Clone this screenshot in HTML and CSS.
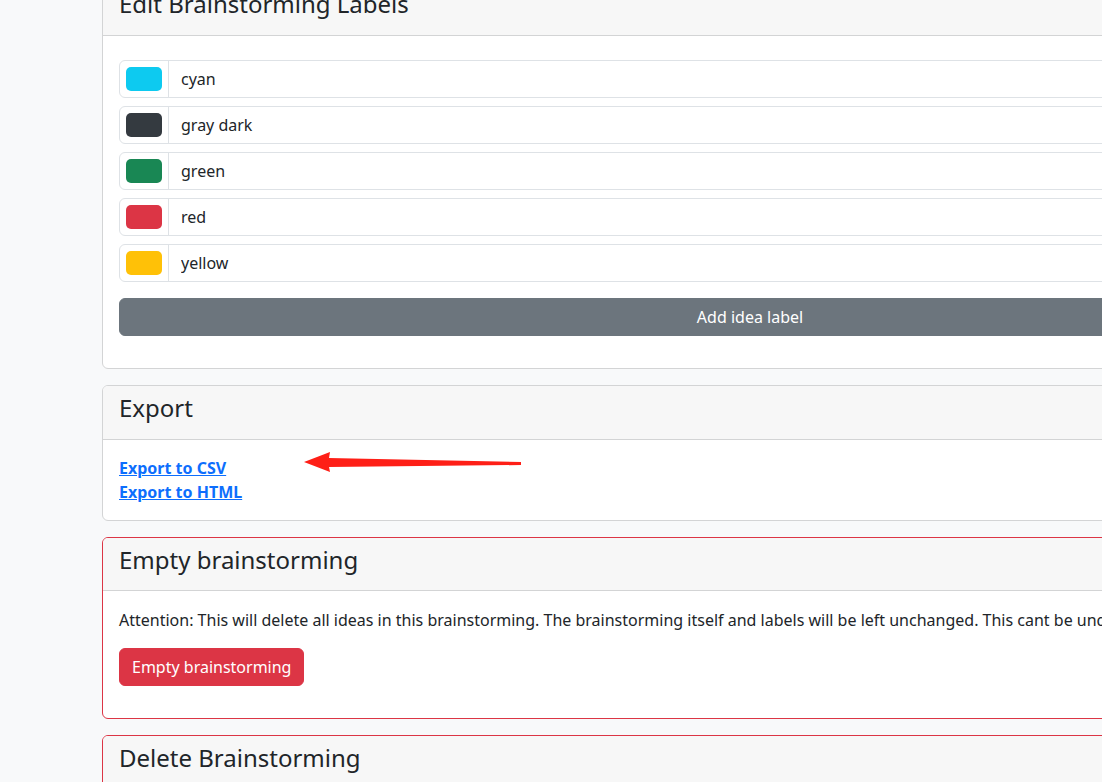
FILE: index.html
```html
<!DOCTYPE html>
<html>
<head>
<meta charset="UTF-8">
<title>Brainstorming settings</title>
<link rel="stylesheet" href="styles.css">
</head>
<body>
<div class="page">

	<!-- labels -->
	<div class="card card-first">
		<div class="card-header"><h4>Edit Brainstorming Labels</h4></div>
		<div class="card-body labels">
			<div class="input-group">
				<span class="swatch-cell"><span class="swatch sw-cyan"></span></span>
				<input type="text" class="form-control" value="cyan">
			</div>
			<div class="input-group">
				<span class="swatch-cell"><span class="swatch sw-dark"></span></span>
				<input type="text" class="form-control" value="gray dark">
			</div>
			<div class="input-group">
				<span class="swatch-cell"><span class="swatch sw-green"></span></span>
				<input type="text" class="form-control" value="green">
			</div>
			<div class="input-group">
				<span class="swatch-cell"><span class="swatch sw-red"></span></span>
				<input type="text" class="form-control" value="red">
			</div>
			<div class="input-group">
				<span class="swatch-cell"><span class="swatch sw-yellow"></span></span>
				<input type="text" class="form-control" value="yellow">
			</div>
			<button type="button" class="btn btn-secondary btn-block">Add idea label</button>
		</div>
	</div>

	<!-- export -->
	<div class="card card-export">
		<div class="card-header"><h4>Export</h4></div>
		<div class="card-body">
			<a href="#" class="export-link">Export to CSV</a><br>
			<a href="#" class="export-link">Export to HTML</a>
		</div>
		<svg class="arrow" width="230" height="30" viewBox="0 0 230 30">
			<polygon points="1,13 27,3 26,9 218,13 218,16 26,18 27,23" fill="#fe1f17"/>
		</svg>
	</div>

	<!-- empty -->
	<div class="card card-danger">
		<div class="card-header"><h4>Empty brainstorming</h4></div>
		<div class="card-body danger-body">
			<p>Attention: This will delete all ideas in this brainstorming. The brainstorming itself and labels will be left unchanged. This cant be undone!</p>
			<button type="button" class="btn btn-danger">Empty brainstorming</button>
		</div>
	</div>

	<!-- delete -->
	<div class="card card-danger">
		<div class="card-header"><h4>Delete Brainstorming</h4></div>
		<div class="card-body danger-body">
			<p>Attention: This will delete the brainstorming with all ideas and labels. This cant be undone!</p>
		</div>
	</div>

</div>
</body>
</html>
```

FILE: styles.css
```css
html, body
{
	margin: 0;
	overflow: hidden;
}
body
{
	background-color: #f8f9fa;
	color: #212529;
	font-family: "Noto Sans", "Liberation Sans", sans-serif;
	font-size: 16px;
	line-height: 1.5;
}
.page
{
	padding-left: 102px;
	width: 1296px;
}
.card
{
	position: relative;
	background-color: #ffffff;
	border: 1px solid #d3d4d5;
	border-radius: 6px;
	margin-bottom: 16px;
}
.card-first
{
	margin-top: -19px;
}
.card-danger
{
	border-color: #dc3545;
}
.card-header
{
	background-color: #f7f7f7;
	border-bottom: 1px solid #d3d4d5;
	border-radius: 5px 5px 0 0;
	padding: 8px 16px;
}
.card-header h4
{
	margin: 0 0 8px 0;
	font-size: 24px;
	font-weight: 400;
	line-height: 1.2;
}
.card-body
{
	padding: 16px;
}
.labels
{
	padding-top: 24px;
}
.danger-body
{
	padding-top: 17px;
}
.input-group
{
	display: flex;
	margin-bottom: 8px;
	border: 1px solid #dee2e6;
	border-radius: 6px;
	height: 36px;
}
.input-group:last-of-type
{
	margin-bottom: 16px;
}
.swatch-cell
{
	display: flex;
	align-items: center;
	justify-content: center;
	width: 48px;
	border-right: 1px solid #dee2e6;
}
.swatch
{
	width: 36px;
	height: 24px;
	border-radius: 5px;
}
.sw-cyan { background-color: #0dcaf0; }
.sw-dark { background-color: #343a40; }
.sw-green { background-color: #198754; }
.sw-red { background-color: #dc3545; }
.sw-yellow { background-color: #ffc107; }
.form-control
{
	flex: 1;
	border: 0;
	background: transparent;
	padding: 0 12px;
	font-family: inherit;
	font-size: 16px;
	color: #212529;
	outline: none;
}
.btn
{
	display: inline-block;
	border: 1px solid transparent;
	border-radius: 6px;
	padding: 6px 12px;
	font-family: inherit;
	font-size: 16px;
	line-height: 1.5;
	color: #ffffff;
	cursor: pointer;
	margin-bottom: 16px;
}
.btn-block
{
	display: block;
	width: 100%;
}
.btn-secondary
{
	background-color: #6c757d;
	border-color: #6c757d;
}
.btn-danger
{
	background-color: #dc3545;
	border-color: #dc3545;
}
.export-link
{
	color: #0d6efd;
	font-weight: bold;
}
p
{
	margin: 0 0 16px 0;
	white-space: nowrap;
}
.arrow
{
	position: absolute;
	left: 200px;
	top: 63px;
}
```
